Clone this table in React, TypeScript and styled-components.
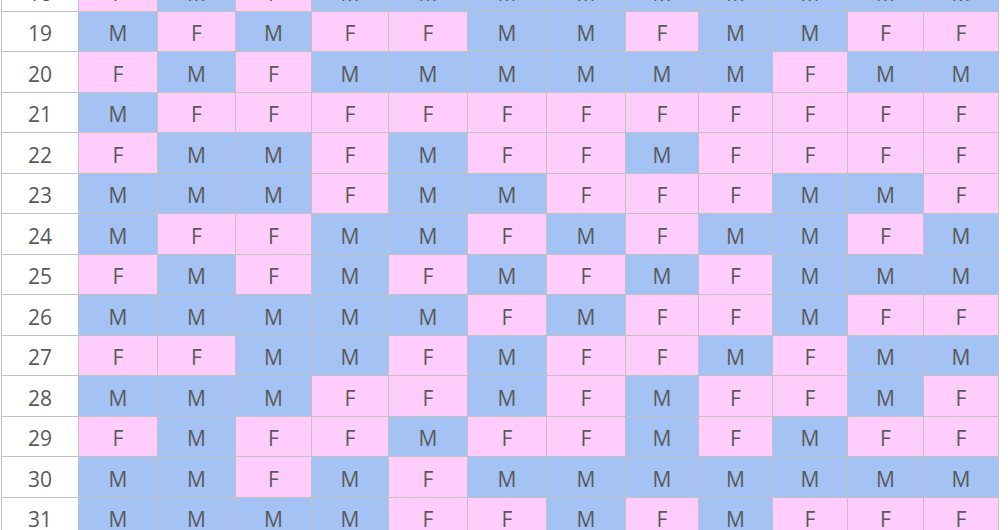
import React from "react";
import styled, { createGlobalStyle } from "styled-components";

const GlobalStyle = createGlobalStyle`
	html, body {
		margin: 0;
		padding: 0;
		background: #ffffff;
		overflow: hidden;
	}
`;

const colWidths = [77, 79, 78, 76, 77, 79, 79, 79, 73, 74, 75, 76, 75];

const rows: [number, string][] = [
	[18, "FMFMMMMMMMMM"],
	[19, "MFMFFMMFMMFF"],
	[20, "FMFMMMMMMFMM"],
	[21, "MFFFFFFFFFFF"],
	[22, "FMMFMFFMFFFF"],
	[23, "MMMFMMFFFMMF"],
	[24, "MFFMMFMFMMFM"],
	[25, "FMFMFMFMFMMM"],
	[26, "MMMMMFMFFMFF"],
	[27, "FFMMFMFFMFMM"],
	[28, "MMMFFMFMFFMF"],
	[29, "FMFFMFFMFMFF"],
	[30, "MMFMFMMMMMMM"],
	[31, "MMMMFFMFMFFF"],
];

const Page = styled.div`
	padding-left: 1px;
	height: 530px;
	overflow: hidden;
`;

const Grid = styled.div`
	display: grid;
	grid-template-columns: ${colWidths.map((w) => `${w}px`).join(" ")};
	grid-auto-rows: 40.5px;
	margin-top: -30px;
	width: max-content;
	border-left: 1px solid #c2c2c2;
	border-top: 1px solid #c2c2c2;
`;

const Cell = styled.div<{ $kind: "num" | "M" | "F" }>`
	display: flex;
	align-items: center;
	justify-content: center;
	box-sizing: border-box;
	padding-top: 5px;
	border-right: 1px solid #c2c2c2;
	border-bottom: 1px solid #c2c2c2;
	font-family: "Open Sans", "Liberation Sans", sans-serif;
	font-size: 21px;
	line-height: 1;
	color: #595959;
	background: ${({ $kind }) =>
		$kind === "num" ? "#ffffff" : $kind === "M" ? "#a4c2f4" : "#ffcdfb"};
`;

const App: React.FC = () => {
	return (
		<>
			<GlobalStyle />
			<Page>
				<Grid>
					{rows.map(([n, cells]) => (
						<React.Fragment key={n}>
							<Cell $kind="num">{n}</Cell>
							{cells.split("").map((c, i) => (
								<Cell key={i} $kind={c as "M" | "F"}>
									{c}
								</Cell>
							))}
						</React.Fragment>
					))}
				</Grid>
			</Page>
		</>
	);
};

export default App;
